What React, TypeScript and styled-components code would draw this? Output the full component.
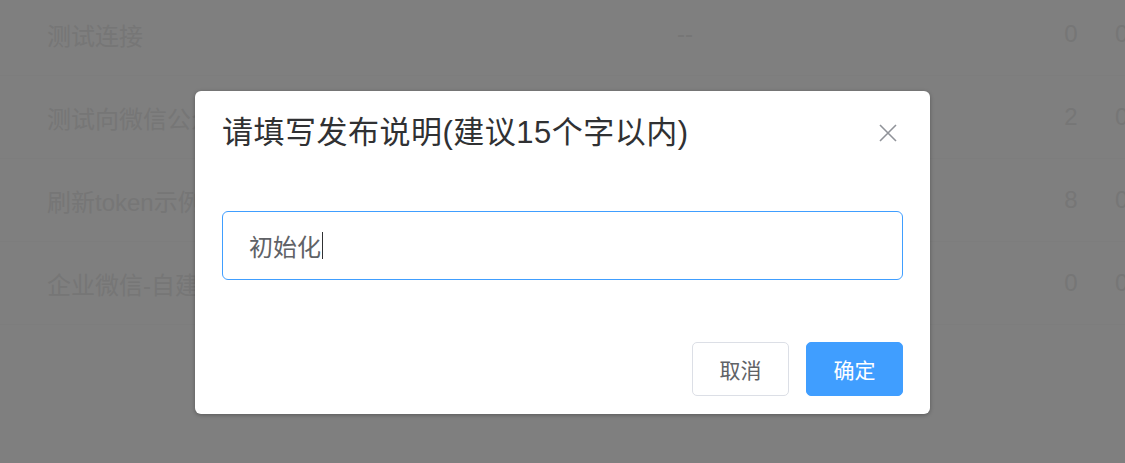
import React from 'react'
import styled, { createGlobalStyle } from 'styled-components'

const GlobalStyle = createGlobalStyle`
  html, body {
    margin: 0;
    padding: 0;
    background: #ffffff;
    overflow: hidden;
  }
  body {
    font-family: "Liberation Sans", "Noto Sans CJK SC", sans-serif;
  }
`

const Page = styled.div`
  width: 1125px;
  height: 463px;
  position: relative;
  overflow: hidden;
  background: #ffffff;
`

const Table = styled.div`
  margin-top: -7px;
`

const Row = styled.div`
  display: grid;
  grid-template-columns: 560px 156px 1fr 40px 34px;
  align-items: center;
  height: 83px;
  padding-left: 47px;
  border-bottom: 1px solid #fafafa;
  box-sizing: border-box;
  font-size: 24px;
  color: #ececec;
`

const Cell = styled.div<{ align?: string }>`
  text-align: ${({ align }) => align || 'left'};
  white-space: nowrap;
`

const LastCell = styled(Cell)`
  padding-left: 24px;
`

const Mask = styled.div`
  position: absolute;
  inset: 0;
  background: rgba(0, 0, 0, 0.5);
  display: flex;
  justify-content: center;
  align-items: flex-start;
  padding-top: 91px;
  box-sizing: border-box;
`

const Dialog = styled.div`
  width: 735px;
  background: #ffffff;
  border-radius: 6px;
  box-shadow: 0 1px 4px rgba(0, 0, 0, 0.3);
`

const Header = styled.div`
  display: flex;
  justify-content: space-between;
  align-items: center;
  padding: 21px 27px 0;
`

const Title = styled.span`
  font-size: 31px;
  letter-spacing: 0.5px;
  line-height: 42px;
  color: #303133;
`

const CloseButton = styled.button`
  border: none;
  background: none;
  padding: 0;
  margin-right: 6px;
  width: 18px;
  height: 18px;
  display: flex;
  cursor: pointer;
`

const Body = styled.div`
  padding: 57px 27px 0;
`

const Field = styled.div`
  height: 69px;
  border: 1px solid #409eff;
  border-radius: 6px;
  box-sizing: border-box;
  display: flex;
  align-items: center;
  padding-left: 26px;
  font-size: 24px;
  color: #606266;
`

const Caret = styled.span`
  display: inline-block;
  width: 1px;
  height: 27px;
  background: #303133;
  margin-left: 1px;
`

const Footer = styled.div`
  display: flex;
  justify-content: flex-end;
  gap: 17px;
  padding: 62px 27px 18px;
`

const Button = styled.button<{ primary?: boolean }>`
  width: 97px;
  height: 54px;
  border-radius: 5px;
  font-family: inherit;
  font-size: 21px;
  cursor: pointer;
  border: 1px solid ${({ primary }) => (primary ? '#409eff' : '#dcdfe6')};
  background: ${({ primary }) => (primary ? '#409eff' : '#ffffff')};
  color: ${({ primary }) => (primary ? '#ffffff' : '#606266')};
`

const rows = [
  { name: '测试连接', a: '0', b: '0' },
  { name: '测试向微信公众号推送消息', a: '2', b: '0' },
  { name: '刷新token示例', a: '8', b: '0' },
  { name: '企业微信-自建应用消息', a: '0', b: '0' },
]

const CloseIcon = () => (
  <svg width="18" height="18" viewBox="0 0 18 18">
    <path d="M1 1 L17 17 M17 1 L1 17" stroke="#909399" strokeWidth="1.6" fill="none" />
  </svg>
)

export default function App() {
  return (
    <Page>
      <GlobalStyle />
      <Table>
        {rows.map((r, i) => (
          <Row key={i}>
            <Cell>{r.name}</Cell>
            <Cell align="center">--</Cell>
            <Cell />
            <Cell align="center">{r.a}</Cell>
            <LastCell>{r.b}</LastCell>
          </Row>
        ))}
      </Table>
      <Mask>
        <Dialog>
          <Header>
            <Title>请填写发布说明(建议15个字以内)</Title>
            <CloseButton aria-label="关闭">
              <CloseIcon />
            </CloseButton>
          </Header>
          <Body>
            <Field>
              初始化
              <Caret />
            </Field>
          </Body>
          <Footer>
            <Button>取消</Button>
            <Button primary>确定</Button>
          </Footer>
        </Dialog>
      </Mask>
    </Page>
  )
}
